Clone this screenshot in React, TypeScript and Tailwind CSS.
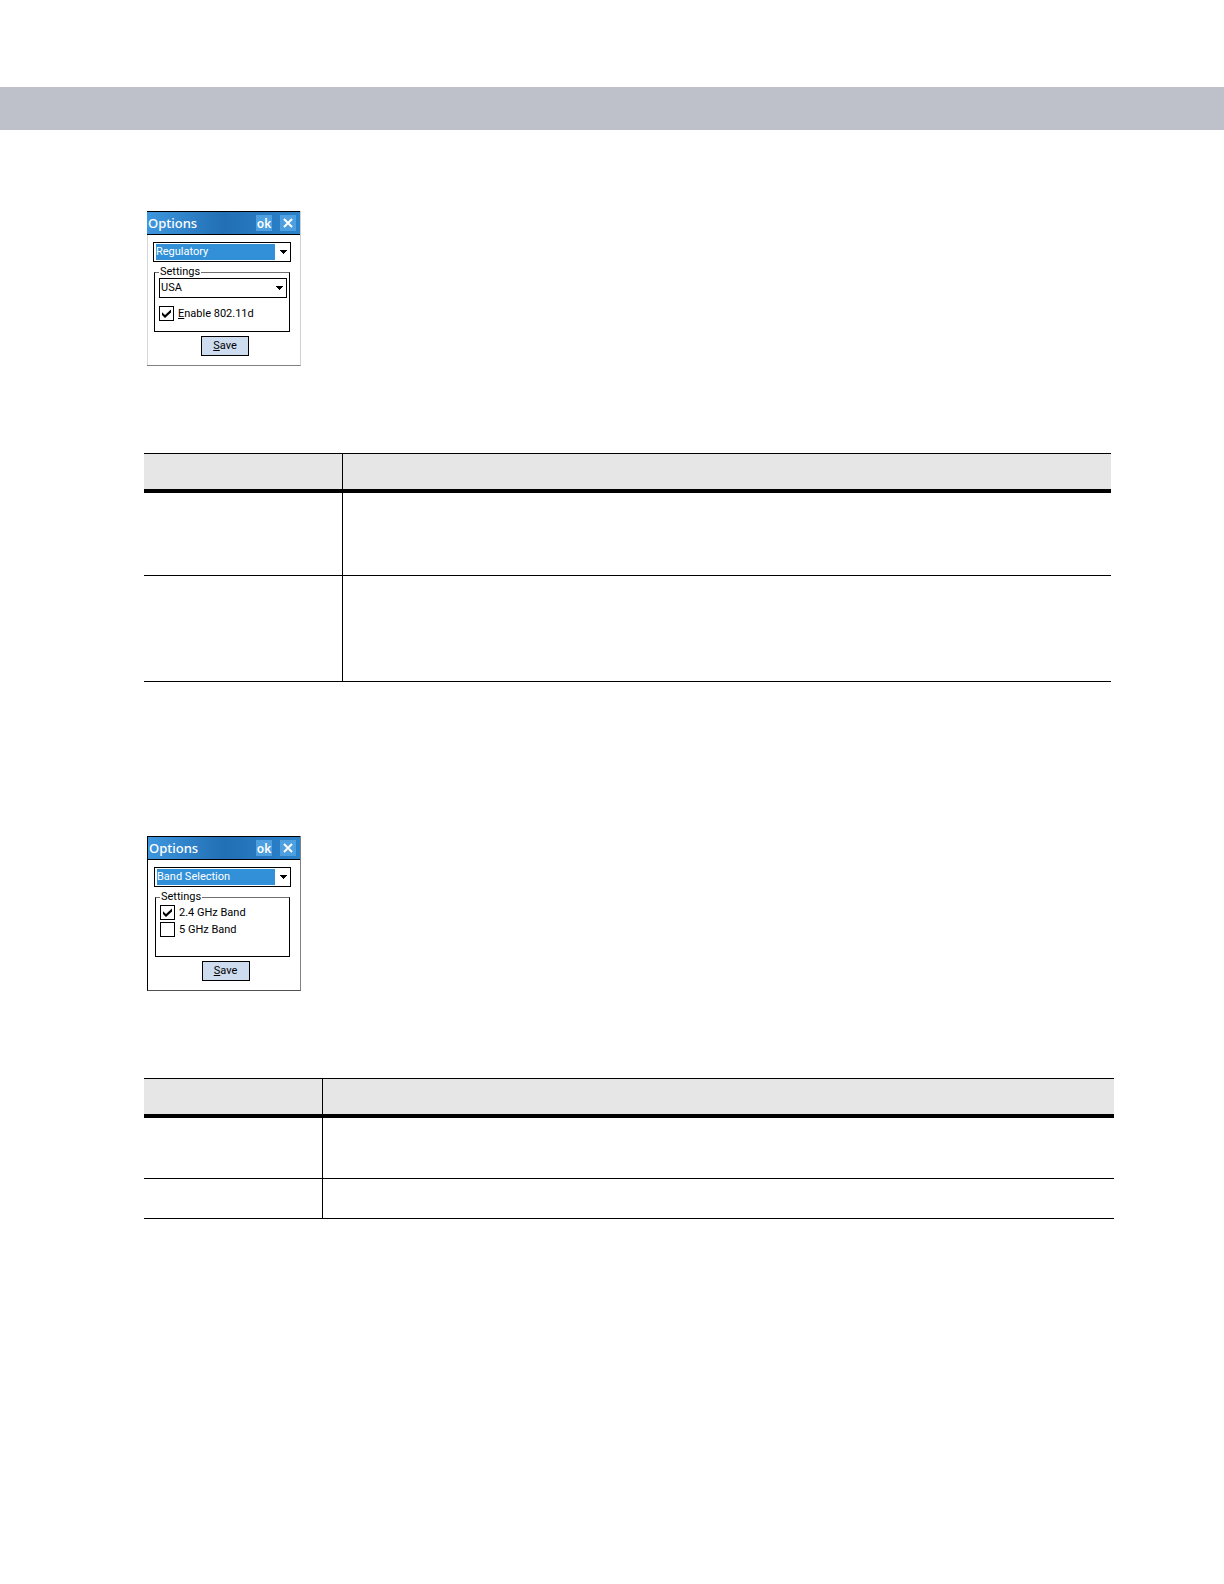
import React, { useState } from "react";

function Arrow() {
  return (
    <svg
      viewBox="0 0 7 4"
      aria-hidden="true"
      shapeRendering="crispEdges"
      className="pointer-events-none absolute top-[7px] right-[3px] h-1 w-[7px]"
    >
      <path d="M0 0h7v1H6v1H5v1H4v1H3V3H2V2H1V1H0z" fill="#000" />
    </svg>
  );
}

function CategorySelect({ value, options }: { value: string; options: string[] }) {
  return (
    <div className="relative h-5 border border-black bg-white">
      <select
        aria-label="Option category"
        defaultValue={value}
        className="block h-[18px] w-full appearance-none border-y border-r-[15px] border-l-2 border-white bg-[#3290d8] text-[11px] leading-4 text-white outline-none"
      >
        {options.map((o) => (
          <option key={o}>{o}</option>
        ))}
      </select>
      <Arrow />
    </div>
  );
}

function CheckRow({ checked, children }: { checked?: boolean; children: React.ReactNode }) {
  const [on, setOn] = useState(!!checked);
  return (
    <label className="flex items-center gap-1 text-[11px] leading-[15px]">
      <span className="relative size-[15px] shrink-0">
        <input
          type="checkbox"
          checked={on}
          onChange={() => setOn(!on)}
          className="block size-[15px] appearance-none border border-black bg-white"
        />
        {on && (
          <svg
            viewBox="0 0 15 15"
            aria-hidden="true"
            className="pointer-events-none absolute inset-0 size-[15px]"
          >
            <path d="M3 6.2v2.9L6 12l6-5.4V3.4L6 8.9z" fill="#000" />
          </svg>
        )}
      </span>
      <span>{children}</span>
    </label>
  );
}

function OptionsDialog({
  category,
  frame,
  body,
  children,
}: {
  category: string;
  frame: string;
  body: string;
  children: React.ReactNode;
}) {
  return (
    <section aria-label={category + " options"} className={"flex w-[154px] flex-col border-r border-b bg-white " + frame}>
      <header className="flex h-6 items-center gap-2 border-y border-black bg-linear-to-r from-[#3d97de] via-[#226fb5] to-[#2b83cb] pr-1 pl-px font-['Noto_Sans',sans-serif] text-white">
        <h2 className="flex-1 text-[13px] leading-4 font-medium">Options</h2>
        <button className="size-4 bg-[#4e9fdf] text-[12px] leading-[15px] font-semibold">ok</button>
        <button aria-label="Close" className="flex size-4 items-center justify-center bg-[#4e9fdf]">
          <svg viewBox="0 0 10 10" aria-hidden="true" className="size-2.5">
            <path d="M1 1l8 8M9 1L1 9" stroke="#fff" strokeWidth="2" />
          </svg>
        </button>
      </header>
      <div className={"flex flex-col pt-[7px] pr-[9px] pb-[9px] " + body}>
        <CategorySelect value={category} options={["Regulatory", "Band Selection"]} />
        <fieldset className="mx-px mt-1 h-[66px] min-w-0 border border-black border-t-[#707070] px-1">
          <legend className="px-px text-[11px] leading-3">Settings</legend>
          {children}
        </fieldset>
        <button className="mt-1 ml-1.5 h-5 w-12 self-center border border-black bg-[#cddcef] text-[11px] leading-[18px]">
          <u>S</u>ave
        </button>
      </div>
    </section>
  );
}

function BlankTable({ label, firstCol, rows }: { label: string; firstCol: string; rows: string[] }) {
  return (
    <table aria-label={label} className="w-full table-fixed border-separate border-spacing-0">
      <colgroup>
        <col className={firstCol} />
        <col />
      </colgroup>
      <thead>
        <tr className="h-10 bg-[#e6e6e6]">
          <th scope="col" className="border-t border-b-4 border-black p-0" />
          <th scope="col" className="border-t border-b-4 border-l border-black p-0" />
        </tr>
      </thead>
      <tbody>
        {rows.map((h, i) => (
          <tr key={i} className={h}>
            <td className="border-b border-black p-0" />
            <td className="border-b border-l border-black p-0" />
          </tr>
        ))}
      </tbody>
    </table>
  );
}

export default function App() {
  return (
    <div className="min-h-screen bg-white pt-[87px] font-['Roboto',sans-serif] text-black">
      <div className="h-[43px] bg-[#bec1c9]" />
      <main className="flex flex-col pt-[81px] pr-[110px] pb-20 pl-36">
        <div className="pl-[3px]">
          <OptionsDialog
            category="Regulatory"
            frame="border-r-[#d0d0d0] border-b-[#808080]"
            body="border-l border-[#d8d8d8] pl-[5px]"
          >
            <div className="relative mr-[-2px] h-5 border border-black bg-white">
              <select
                aria-label="Country"
                defaultValue="USA"
                className="block h-[18px] w-full appearance-none bg-transparent pl-px text-[11px] leading-[18px] outline-none"
              >
                <option>USA</option>
              </select>
              <Arrow />
            </div>
            <div className="pt-2">
              <CheckRow checked>
                <u>E</u>nable 802.11d
              </CheckRow>
            </div>
          </OptionsDialog>
        </div>
        <div className="mt-[87px] mr-[3px]">
          <BlankTable label="Regulatory options" firstCol="w-[198px]" rows={["h-[83px]", "h-[106px]"]} />
        </div>
        <div className="mt-[154px] pl-[3px]">
          <OptionsDialog
            category="Band Selection"
            frame="border-l border-l-black border-r-[#808080] border-b-[#505050]"
            body="pl-1.5"
          >
            <div className="flex flex-col gap-0.5 pt-0.5">
              <CheckRow checked>2.4 GHz Band</CheckRow>
              <CheckRow>5 GHz Band</CheckRow>
            </div>
          </OptionsDialog>
        </div>
        <div className="mt-[87px]">
          <BlankTable label="Band selection options" firstCol="w-[178px]" rows={["h-[61px]", "h-10"]} />
        </div>
      </main>
    </div>
  );
}
